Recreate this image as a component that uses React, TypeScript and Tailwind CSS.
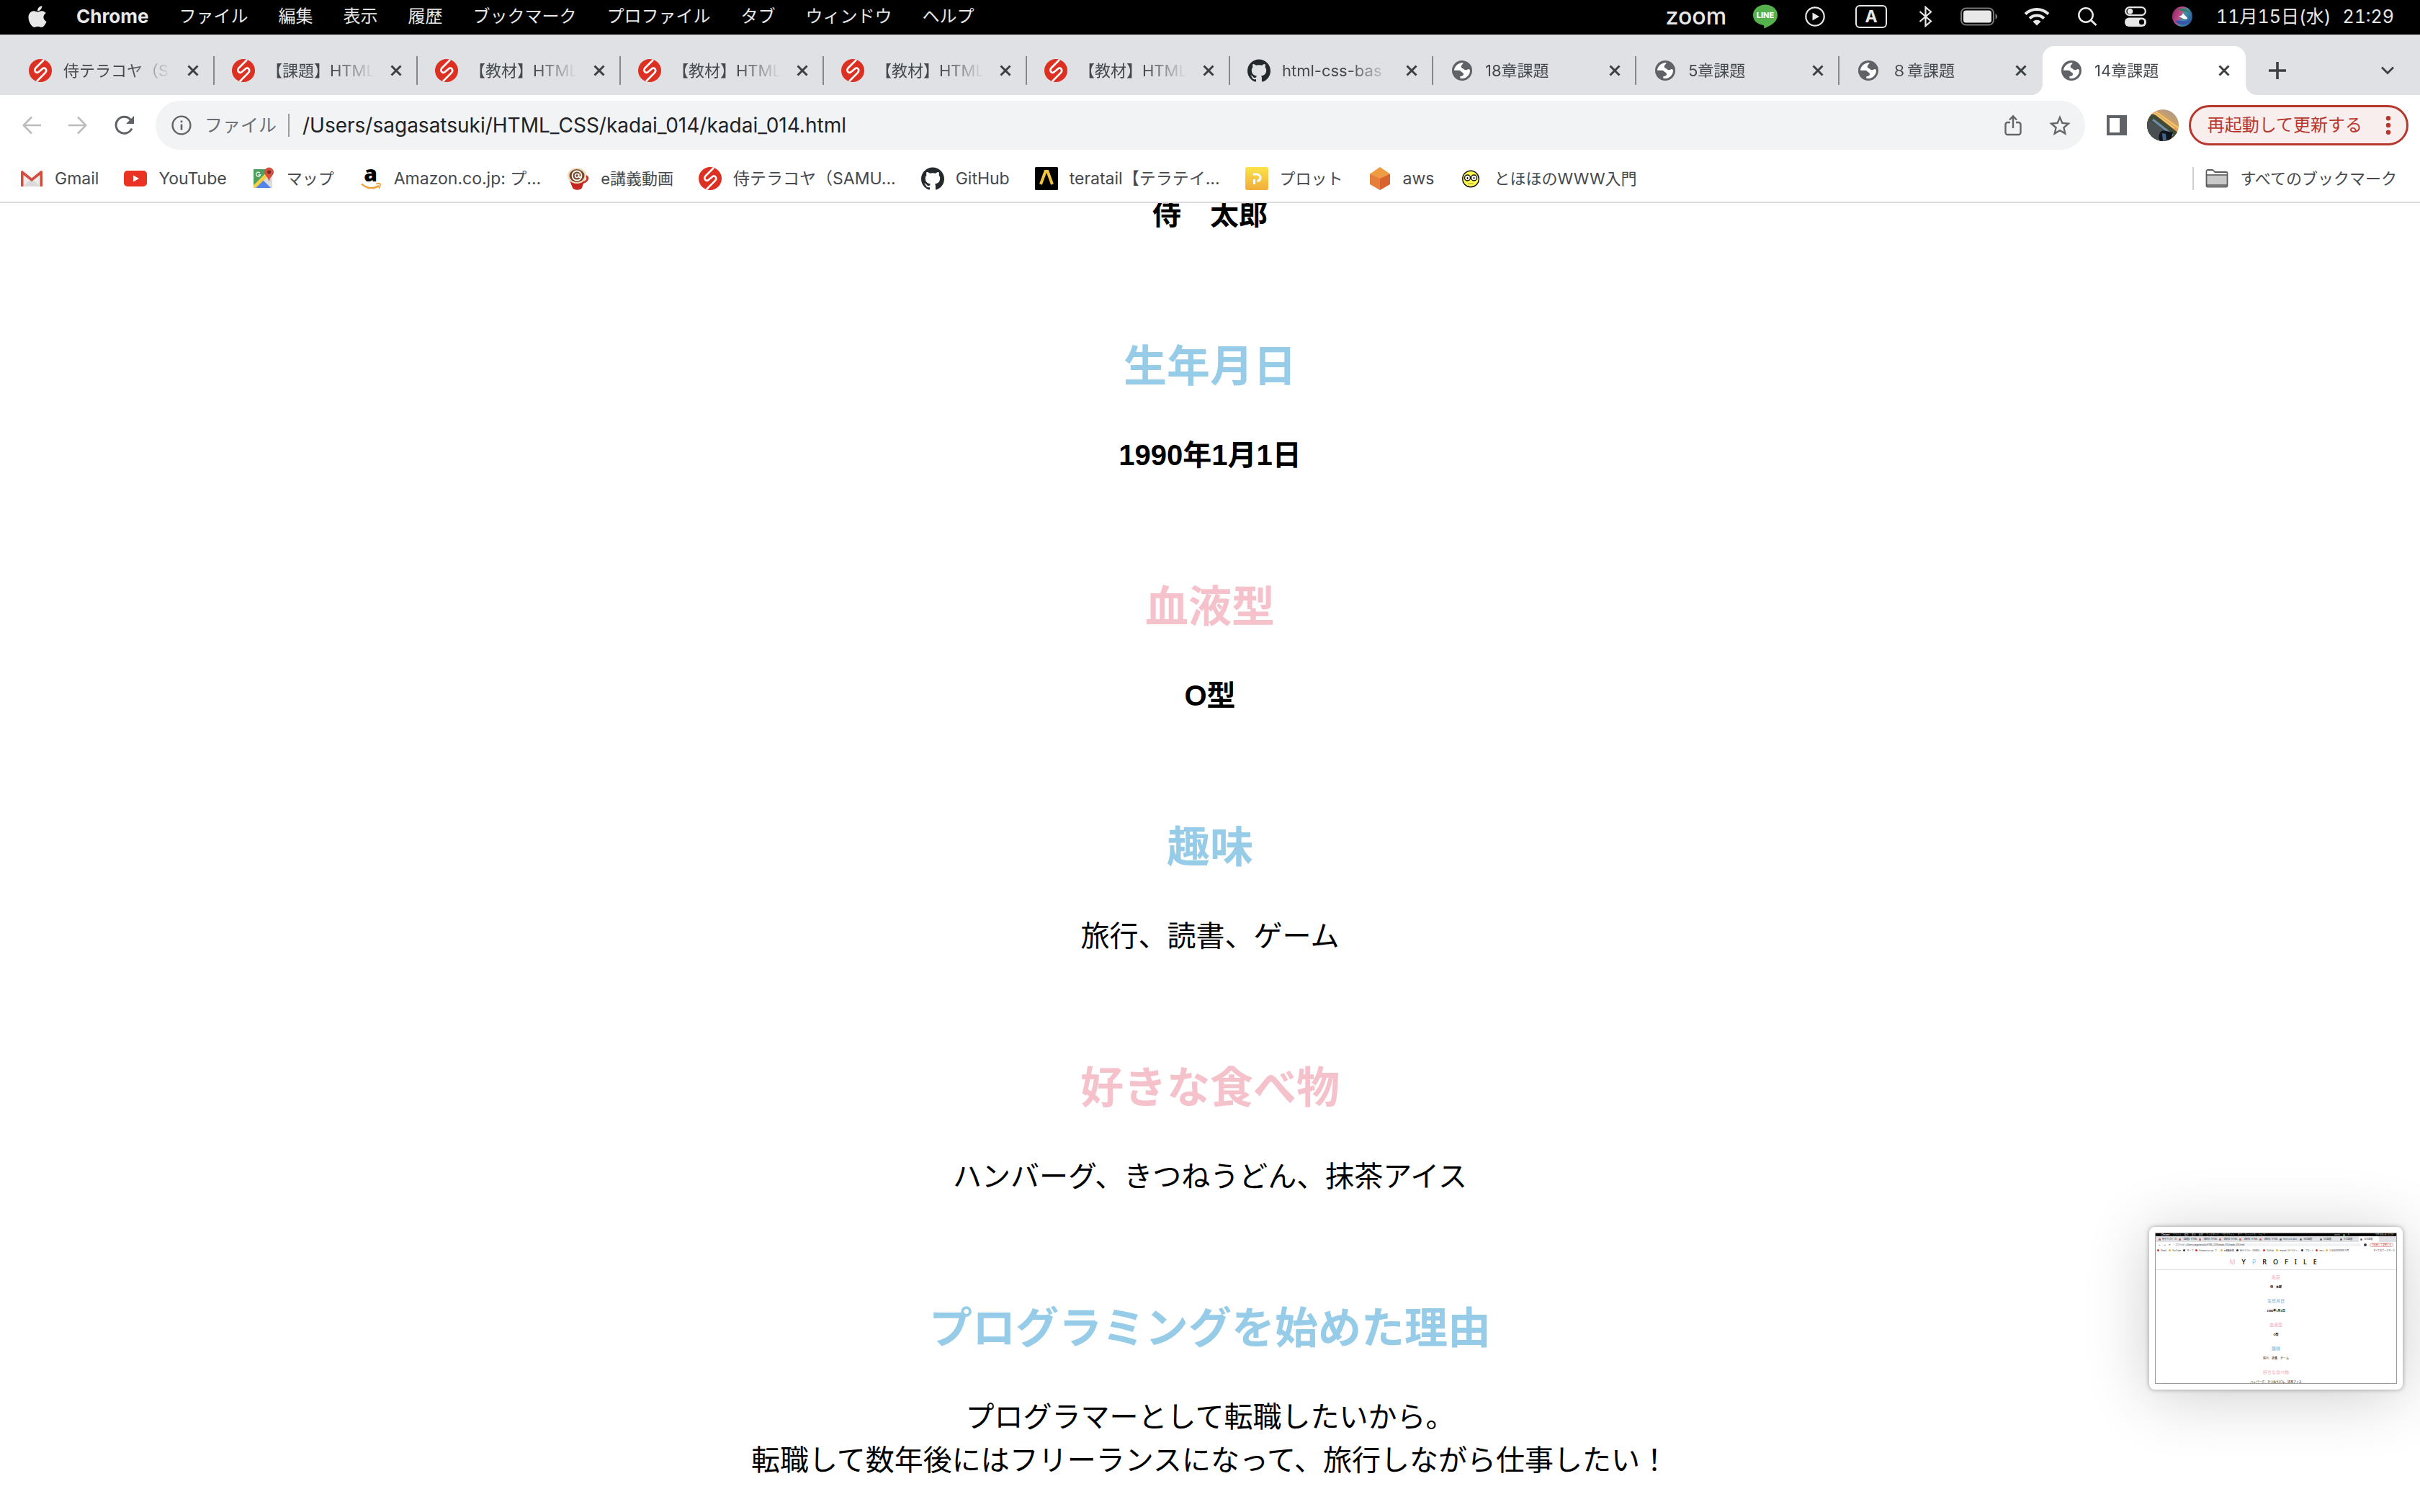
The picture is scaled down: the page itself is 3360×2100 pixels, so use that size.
import type { ReactNode } from "react";
import { FaApple } from "react-icons/fa";
import { SiGithub } from "react-icons/si";

const uiFont = "font-['Inter','Noto_Sans_CJK_JP',sans-serif]";

/* ---------- icons ---------- */

type IconProps = { className?: string };

function SamuraiIcon({ className = "size-8" }: IconProps) {
  return (
    <svg viewBox="0 0 32 32" className={className} aria-hidden="true">
      <circle cx="16" cy="16" r="16" fill="#dc3023" />
      <path
        d="M21 1 L9.500 12.500 C6.500 15.800 10 20.600 13.600 18 L19 13.400 C22.600 10.600 26 15.400 23 18.800 L11 31"
        fill="none"
        stroke="#fff"
        strokeWidth="2.600"
      />
    </svg>
  );
}

function GlobeIcon({ className = "size-7" }: IconProps) {
  return (
    <svg viewBox="0 0 84 84" className={className} aria-hidden="true">
      <circle cx="42" cy="42" r="42" fill="#5f6368" />
      <path
        d="M9 41 C10 24 26 10 46 9 C48 14 40 18 38 24 C37 32 46 32 49 36 C53 41 62 41 66 37 C70 35 75 38 75 42 C75 60 60 75 42 75 L34 74 V66 C38 66 47 66 48 58 C48 49 40 50 37 45 C35 41 31 41 26 41 Z"
        fill="#fff"
      />
    </svg>
  );
}

function CloseIcon() {
  return (
    <svg viewBox="0 0 16 16" className="size-4" aria-hidden="true">
      <path d="M1.500 1.500 L14.500 14.500 M14.500 1.500 L1.500 14.500" stroke="#3c4043" strokeWidth="3" />
    </svg>
  );
}

function GmailIcon() {
  return (
    <svg viewBox="0 0 32 32" className="size-8" aria-hidden="true">
      <rect x="1" y="5" width="30" height="22" rx="2" fill="#ececec" />
      <path d="M4 27 L16 16 L28 27 Z" fill="#dadada" />
      <path d="M5 5 L16 14 L27 5 Z" fill="#f8f8f8" />
      <path d="M1 7 a2 2 0 0 1 2-2 L16 15.500 L29 5 a2 2 0 0 1 2 2 V27 H27.500 V11 L16 20 L4.500 11 V27 H1 Z" fill="#d54b3d" />
    </svg>
  );
}

function YouTubeIcon() {
  return (
    <svg viewBox="0 0 32 32" className="size-8" aria-hidden="true">
      <rect y="5" width="32" height="22" rx="5" fill="#ea3323" />
      <path d="M13 11.500 L21 16 L13 20.500 Z" fill="#fff" />
    </svg>
  );
}

function MapsIcon() {
  return (
    <svg viewBox="0 0 32 32" className="size-8" aria-hidden="true">
      <rect x="2" y="3" width="26" height="26" rx="2" fill="#4c9f5d" />
      <path d="M2 27 L22 7 L28 13 V27 a2 2 0 0 1 -2 2 H4 a2 2 0 0 1 -2 -2 Z" fill="#dcdcdc" />
      <path d="M5 29 L15 18 L26 29 Z" fill="#5384ec" />
      <path d="M2 25 L20 7 L24 11 L5 29 H4 a2 2 0 0 1 -2 -2 Z" fill="#f5ce47" />
      <path d="M2 3 H17 V10 L2 25 Z" fill="#4c9f5d" />
      <path d="M11 8.300 A3 3 0 1 0 11.500 10.800 H8.500" fill="none" stroke="#fff" strokeWidth="1.300" />
      <path d="M23.500 0.500 a6.500 6.500 0 0 1 6.500 6.500 c0 5 -5.500 6 -6.500 14 c-1 -8 -6.500 -9 -6.500 -14 a6.500 6.500 0 0 1 6.500 -6.500 Z" fill="#d5503f" />
      <circle cx="23.500" cy="7" r="2.500" fill="#722b20" />
    </svg>
  );
}

function AmazonIcon() {
  return (
    <span className="flex size-8 flex-col items-center" aria-hidden="true">
      <span className="h-[22px] text-[30px] leading-[18px] font-extrabold text-black font-['Open_Sans',sans-serif]">a</span>
      <svg viewBox="0 0 30 10" className="h-[10px] w-[30px]">
        <path d="M2 1.500 C9 8.500 20 8.500 26 4" fill="none" stroke="#f19e38" strokeWidth="2.400" />
        <path d="M22 1.500 C25 0.500 28 1 28 2 C28 4 27 6.500 26 7.500" fill="none" stroke="#f19e38" strokeWidth="1.800" />
      </svg>
    </span>
  );
}

function CupIcon() {
  return (
    <svg viewBox="0 0 32 32" className="size-8" aria-hidden="true">
      <path d="M24 14 C31 9 33 20 22 22" fill="none" stroke="#c9302a" strokeWidth="3" />
      <path d="M4 16 H26 L22 29 C20 32.500 11 32.500 9 29 Z" fill="#c5261f" />
      <ellipse cx="15" cy="12" rx="13" ry="11" fill="#ecdcc0" />
      <ellipse cx="15" cy="12" rx="10.500" ry="9" fill="#7a4527" />
      <circle cx="15" cy="12" r="6.500" fill="none" stroke="#fff" strokeWidth="1.800" />
      <circle cx="15" cy="12" r="2.500" fill="none" stroke="#fff" strokeWidth="1.600" />
      <path d="M17.800 9 V13 C18 15 20.500 14.500 21 12.500" fill="none" stroke="#fff" strokeWidth="1.500" />
    </svg>
  );
}

function TeratailIcon() {
  return (
    <svg viewBox="0 0 32 32" className="size-8" aria-hidden="true">
      <rect width="32" height="32" rx="1.500" fill="#000" />
      <path d="M8 24 L14.500 6 H17.500 L24 24" fill="none" stroke="#f3c33c" strokeWidth="4" />
    </svg>
  );
}

function PlotIcon() {
  return (
    <svg viewBox="0 0 32 32" className="size-8" aria-hidden="true">
      <defs>
        <linearGradient id="plot" x1="0" y1="0" x2="0" y2="1">
          <stop offset="0" stopColor="#fbe34a" />
          <stop offset="1" stopColor="#f1ad3b" />
        </linearGradient>
      </defs>
      <rect width="32" height="32" rx="3" fill="url(#plot)" />
      <path d="M11 10 H16 a5 5 0 0 1 5 5 v0 a5 5 0 0 1 -4.500 4.500 M12.500 17 V24" fill="none" stroke="#fff" strokeWidth="3" />
    </svg>
  );
}

function AwsIcon() {
  return (
    <svg viewBox="0 0 32 32" className="size-8" aria-hidden="true">
      <path d="M16 0 L30 9.500 L16 18 L2 9.500 Z" fill="#ee9c41" />
      <path d="M2 9.500 L16 16 V32 L2 24 Z" fill="#e4803c" />
      <path d="M30 9.500 L16 16 V32 L30 24 Z" fill="#d8632f" />
    </svg>
  );
}

function TohohoIcon() {
  return (
    <svg viewBox="0 0 32 32" className="size-8" aria-hidden="true">
      <circle cx="16" cy="16.500" r="11.300" fill="#fdf94f" stroke="#111" strokeWidth="1.400" />
      <circle cx="11.500" cy="15" r="4" fill="#fff" stroke="#111" strokeWidth="1.400" />
      <circle cx="20.500" cy="15" r="4" fill="#fff" stroke="#111" strokeWidth="1.400" />
      <path d="M11.500 14 V17 M20.500 14 V17" stroke="#111" strokeWidth="1.600" />
      <path d="M12 23 H20" stroke="#b5a82c" strokeWidth="1.200" />
    </svg>
  );
}

function FolderIcon() {
  return (
    <svg viewBox="0 0 32 32" className="size-8" aria-hidden="true">
      <path d="M1.500 26 V6 a2 2 0 0 1 2-2 H10 L13 7 H29 a1.500 1.500 0 0 1 1.500 1.500 V26 a1.500 1.500 0 0 1 -1.500 1.500 H3 A1.500 1.500 0 0 1 1.500 26 Z" fill="#c9c9c9" stroke="#5a5a5a" strokeWidth="1.800" />
      <path d="M2.500 5 H10 L13 8 H29.500 V10 H2.500 Z" fill="#fff" />
      <path d="M1.500 11 H30.500 M2 25 H30" stroke="#5a5a5a" strokeWidth="1.400" />
    </svg>
  );
}

function BackIcon({ className = "size-[26px]" }: IconProps) {
  return (
    <svg viewBox="0 0 26 26" className={className} aria-hidden="true">
      <path d="M26 13 H2 M13 1.500 L1.700 13 L13 24.500" fill="none" stroke="#babcbe" strokeWidth="2.600" />
    </svg>
  );
}

function ReloadIcon() {
  return (
    <svg viewBox="0 0 28 28" className="size-7" aria-hidden="true">
      <path d="M24 18.500 A11.500 11.500 0 1 1 22.500 6.500" fill="none" stroke="#5f6368" strokeWidth="3" />
      <path d="M27 1 V12 H16 Z" fill="#5f6368" />
    </svg>
  );
}

function InfoIcon() {
  return (
    <svg viewBox="0 0 28 28" className="size-7" aria-hidden="true">
      <circle cx="14" cy="14" r="12.400" fill="none" stroke="#5f6368" strokeWidth="2.400" />
      <path d="M14 12.500 V20.500 M14 7.500 V10.200" stroke="#5f6368" strokeWidth="2.600" />
    </svg>
  );
}

function ShareIcon() {
  return (
    <svg viewBox="0 0 24 30" className="h-[30px] w-6" aria-hidden="true">
      <path d="M8 11 H4.500 a3 3 0 0 0 -3 3 V25 a3 3 0 0 0 3 3 H19.500 a3 3 0 0 0 3 -3 V14 a3 3 0 0 0 -3 -3 H16 M12 19 V3 M7 7.500 L12 2.300 L17 7.500" fill="none" stroke="#666" strokeWidth="2.400" />
    </svg>
  );
}

function StarIcon() {
  return (
    <svg viewBox="2 2 20 19" className="h-7 w-[30px]" aria-hidden="true">
      <path
        d="M22 9.240l-7.190-.62L12 2 9.190 8.630 2 9.240l5.460 4.730L5.820 21 12 17.270 18.180 21l-1.630-7.030L22 9.240zM12 15.400l-3.760 2.270 1-4.280-3.320-2.880 4.380-.38L12 6.100l1.710 4.040 4.380.38-3.320 2.880 1 4.280L12 15.400z"
        fill="#666"
      />
    </svg>
  );
}

function SidePanelIcon() {
  return (
    <svg viewBox="0 0 28 28" className="size-7" aria-hidden="true">
      <path d="M0 0 H28 V28 H0 Z M4 4 V24 H18 V4 Z" fill="#5f6368" fillRule="evenodd" />
    </svg>
  );
}

function Avatar() {
  return (
    <svg viewBox="0 0 44 44" className="size-11" aria-hidden="true">
      <defs>
        <clipPath id="avatar">
          <circle cx="22" cy="22" r="22" />
        </clipPath>
        <linearGradient id="sky" x1="0.200" y1="0.800" x2="0.700" y2="0">
          <stop offset="0" stopColor="#f0a63c" />
          <stop offset="0.450" stopColor="#eda552" />
          <stop offset="1" stopColor="#a99a88" />
        </linearGradient>
      </defs>
      <g clipPath="url(#avatar)">
        <rect width="44" height="44" fill="url(#sky)" />
        <path d="M12 3 L44 26 M10 5 L38 26" stroke="#f7c765" strokeWidth="2" />
        <path d="M0 4 L12 8 L44 33 V44 H0 Z" fill="#414a34" />
        <path d="M8 14 L36 36" stroke="#6d8db0" strokeWidth="3" />
        <path d="M0 14 L12 20 L30 34 L24 44 H0 Z" fill="#4a4f52" />
        <path d="M16 40 C18 26 22 29 36 32 L32 44 H18 Z" fill="#10151b" />
        <path d="M21 33 L26 34 L27 44 H22 Z" fill="#45648c" />
      </g>
    </svg>
  );
}

/* ---------- menu bar ---------- */

const menus = ["ファイル", "編集", "表示", "履歴", "ブックマーク", "プロファイル", "タブ", "ウィンドウ", "ヘルプ"];

function MenuBar() {
  return (
    <header className="flex h-12 shrink-0 items-center justify-between bg-black pr-9 pb-[2px] pl-10 text-[#e8e8e8]">
      <nav aria-label="メニューバー" className="flex items-center gap-[42px] text-[24px] leading-8">
        <button aria-label="Apple" className="flex w-6 justify-center">
          <FaApple className="size-[34px] shrink-0" />
        </button>
        <button className="text-[26px] font-bold">Chrome</button>
        {menus.map((m) => (
          <button key={m}>{m}</button>
        ))}
      </nav>
      <div className="flex items-center text-[25px] leading-8">
        <span className="mr-9 text-[32px] font-medium">zoom</span>
        <svg viewBox="0 0 36 34" className="mr-[37px] h-[34px] w-9" aria-label="LINE">
          <path d="M18 0.500 C8 0.500 1 7 1 15 C1 23 7 27.500 15 29 C17 29.500 16 32 16.500 33.500 C22 31 35 26 35 15 C35 7 28 0.500 18 0.500 Z" fill="#54b14c" />
          <text x="18" y="19" textAnchor="middle" fontSize="11" fontWeight="800" fill="#fff" className="font-['Inter',sans-serif]">
            LINE
          </text>
        </svg>
        <svg viewBox="0 0 28 28" className="mr-[42px] size-7" aria-hidden="true">
          <circle cx="14" cy="14" r="12.700" fill="none" stroke="#e8e8e8" strokeWidth="2.200" />
          <path d="M10.500 8.500 L20 14 L10.500 19.500 Z" fill="#e8e8e8" />
        </svg>
        <span className="mr-[44px] flex h-8 w-11 items-center justify-center rounded-md border-2 border-[#e8e8e8] text-[23px] font-bold">A</span>
        <svg viewBox="0 0 20 30" className="mr-[38px] h-[30px] w-5" aria-hidden="true">
          <path d="M1.500 8 L17 21.500 L9.500 28 V2 L17 8.500 L1.500 22" fill="none" stroke="#e8e8e8" strokeWidth="2.200" />
        </svg>
        <svg viewBox="0 0 52 26" className="mr-9 h-[26px] w-[52px]" aria-hidden="true">
          <rect x="1" y="1.500" width="45" height="23" rx="6.500" fill="none" stroke="#777" strokeWidth="2" />
          <rect x="4" y="4.500" width="39" height="17" rx="3.500" fill="#e8e8e8" />
          <path d="M48.500 9 C52 10.500 52 15.500 48.500 17 Z" fill="#777" />
        </svg>
        <svg viewBox="0 0 36 26" className="mr-[38px] h-[26px] w-9" aria-hidden="true">
          <path d="M2 9.500 C11 0.800 25 0.800 34 9.500 M8 15.500 C14 10.200 22 10.200 28 15.500" fill="none" stroke="#e8e8e8" strokeWidth="4" />
          <path d="M12.500 20 C15.500 17 20.500 17 23.500 20 L18 25.500 Z" fill="#e8e8e8" />
        </svg>
        <svg viewBox="0 0 28 28" className="mr-[38px] size-7" aria-hidden="true">
          <circle cx="12" cy="12" r="9.700" fill="none" stroke="#e8e8e8" strokeWidth="2.500" />
          <path d="M19 19 L26.500 26" stroke="#e8e8e8" strokeWidth="3" />
        </svg>
        <svg viewBox="0 0 30 28" className="mr-9 h-7 w-[30px]" aria-hidden="true">
          <rect x="1.200" y="1.200" width="27.600" height="11" rx="5.500" fill="none" stroke="#e8e8e8" strokeWidth="2.200" />
          <circle cx="7.500" cy="6.700" r="3.800" fill="#e8e8e8" />
          <rect x="0" y="15.500" width="30" height="12.500" rx="6" fill="#e8e8e8" />
          <circle cx="23.500" cy="21.700" r="3.600" fill="#000" />
        </svg>
        <svg viewBox="0 0 28 28" className="mr-[33px] size-7" aria-hidden="true">
          <defs>
            <linearGradient id="siri" x1="0" y1="0.300" x2="1" y2="0.700">
              <stop offset="0" stopColor="#8e2a68" />
              <stop offset="0.350" stopColor="#c14a84" />
              <stop offset="0.600" stopColor="#3a93a4" />
              <stop offset="1" stopColor="#2d4f9c" />
            </linearGradient>
          </defs>
          <circle cx="14" cy="14" r="14" fill="url(#siri)" />
          <path d="M8 4 C14 1 22 4 24 9 C18 6 13 7 8 4 Z" fill="#357c66" />
          <path d="M4 20 C10 28 20 27 25 18 C18 23 12 18 4 20 Z" fill="#3456b0" />
          <path d="M15 9 C17 13 21 14 21 17 C17 19 15 16 9 14 C13 13 14 12 15 9 Z" fill="#fff" />
        </svg>
        <time className="flex gap-4 tabular-nums">
          <span>11月15日(水)</span>
          <span>21:29</span>
        </time>
      </div>
    </header>
  );
}

/* ---------- tabs ---------- */

type Tab = { title: string; icon: "samurai" | "github" | "globe" };

const tabs: Tab[] = [
  { title: "侍テラコヤ（S", icon: "samurai" },
  { title: "【課題】HTML", icon: "samurai" },
  { title: "【教材】HTML", icon: "samurai" },
  { title: "【教材】HTML", icon: "samurai" },
  { title: "【教材】HTML", icon: "samurai" },
  { title: "【教材】HTML", icon: "samurai" },
  { title: "html-css-bas", icon: "github" },
  { title: "18章課題", icon: "globe" },
  { title: "5章課題", icon: "globe" },
  { title: "８章課題", icon: "globe" },
  { title: "14章課題", icon: "globe" },
];

const tabIcons: Record<Tab["icon"], ReactNode> = {
  samurai: <SamuraiIcon />,
  github: <SiGithub className="size-8 text-[#24292e]" />,
  globe: <GlobeIcon />,
};

function TabStrip() {
  const last = tabs.length - 1;
  return (
    <div className="flex h-[84px] shrink-0 items-end bg-[#dfe1e5] pr-9 pl-4">
      <ul className="flex h-[68px] min-w-0">
        {tabs.map((tab, i) => (
          <li
            key={i}
            className={
              i === last
                ? "relative flex w-[282px] items-center rounded-t-2xl bg-white pl-6"
                : "flex w-[282px] items-center pl-6"
            }
          >
            {i === last && (
              <>
                <span className="absolute bottom-0 -left-4 size-4 bg-[radial-gradient(circle_at_0_0,transparent_16px,white_16px)]" />
                <span className="absolute -right-4 bottom-0 size-4 bg-[radial-gradient(circle_at_100%_0,transparent_16px,white_16px)]" />
              </>
            )}
            <span className="flex w-8 shrink-0 justify-center">{tabIcons[tab.icon]}</span>
            <button className="ml-4 h-8 w-[150px] shrink-0 text-left text-[22px] leading-8 whitespace-nowrap text-[#45494d] [mask-image:linear-gradient(to_right,black_62%,transparent)]">
              {tab.title}
            </button>
            <button aria-label="閉じる" className="ml-[22px]">
              <CloseIcon />
            </button>
            {i < last - 1 && <span className="ml-5 h-10 w-[2px] shrink-0 bg-[#85888c]" />}
          </li>
        ))}
      </ul>
      <div className="flex h-[68px] flex-1 items-center justify-between pl-8">
        <button aria-label="新しいタブ">
          <svg viewBox="0 0 24 24" className="size-6" aria-hidden="true">
            <path d="M12 0 V24 M0 12 H24" stroke="#3c4043" strokeWidth="3.600" />
          </svg>
        </button>
        <button aria-label="タブを検索">
          <svg viewBox="0 0 18 12" className="h-3 w-[18px]" aria-hidden="true">
            <path d="M1 1.500 L9 9.500 L17 1.500" fill="none" stroke="#3c4043" strokeWidth="2.800" />
          </svg>
        </button>
      </div>
    </div>
  );
}

/* ---------- toolbar ---------- */

function Toolbar() {
  return (
    <div className="flex h-[84px] shrink-0 items-center pr-4 pl-[31px]">
      <button aria-label="戻る" className="mr-[38px]">
        <BackIcon />
      </button>
      <button aria-label="進む" className="mr-[38px]">
        <BackIcon className="size-[26px] rotate-180" />
      </button>
      <button aria-label="再読み込み" className="mr-[29px]">
        <ReloadIcon />
      </button>
      <div className="flex h-[68px] flex-1 items-center rounded-full bg-[#f1f3f5] pr-5 pl-[22px]">
        <InfoIcon />
        <label htmlFor="url" className="mr-4 ml-[18px] text-[25px] leading-8 text-[#6a6e73]">
          ファイル
        </label>
        <span className="mr-[18px] h-8 w-[2px] bg-[#9a9da1]" />
        <input
          id="url"
          readOnly
          value="/Users/sagasatsuki/HTML_CSS/kadai_014/kadai_014.html"
          className="min-w-0 flex-1 bg-transparent text-[28px] leading-9 text-[#202124] outline-none"
        />
        <button aria-label="共有" className="mr-[38px]">
          <ShareIcon />
        </button>
        <button aria-label="ブックマークに追加">
          <StarIcon />
        </button>
      </div>
      <button aria-label="サイドパネル" className="mr-7 ml-[30px]">
        <SidePanelIcon />
      </button>
      <button aria-label="プロフィール" className="mr-[14px]">
        <Avatar />
      </button>
      <button className="flex h-14 items-center gap-8 rounded-full border-[3px] border-[#b8372c] bg-[#f9eeee] pr-[21px] pl-[23px] text-[24px] leading-8 text-[#b8372c]">
        再起動して更新する
        <svg viewBox="0 0 8 26" className="h-[26px] w-2" aria-hidden="true">
          <circle cx="4" cy="3.200" r="3.200" fill="#b8372c" />
          <circle cx="4" cy="13" r="3.200" fill="#b8372c" />
          <circle cx="4" cy="22.800" r="3.200" fill="#b8372c" />
        </svg>
      </button>
    </div>
  );
}

/* ---------- bookmarks ---------- */

type Bookmark = { label: string; icon: ReactNode; compact?: boolean };

const bookmarks: Bookmark[] = [
  { label: "Gmail", icon: <GmailIcon /> },
  { label: "YouTube", icon: <YouTubeIcon /> },
  { label: "マップ", icon: <MapsIcon />, compact: true },
  { label: "Amazon.co.jp: プ...", icon: <AmazonIcon /> },
  { label: "e講義動画", icon: <CupIcon />, compact: true },
  { label: "侍テラコヤ（SAMU...", icon: <SamuraiIcon /> },
  { label: "GitHub", icon: <SiGithub className="size-8 text-[#24292e]" /> },
  { label: "teratail【テラテイ...", icon: <TeratailIcon /> },
  { label: "プロット", icon: <PlotIcon />, compact: true },
  { label: "aws", icon: <AwsIcon /> },
  { label: "とほほのWWW入門", icon: <TohohoIcon />, compact: true },
];

function BookmarksBar() {
  return (
    <nav
      aria-label="ブックマーク"
      className="flex h-[66px] shrink-0 items-center justify-between border-b-2 border-[#dcdcdc] px-7 leading-8 text-[#45494d]"
    >
      <div className="flex items-center gap-[35px]">
        {bookmarks.map((b) => (
          <a key={b.label} href="#" className="flex items-center gap-4 whitespace-nowrap">
            {b.icon}
            <span className={b.compact ? "text-[22px]" : "text-[23px]"}>{b.label}</span>
          </a>
        ))}
      </div>
      <button className="mr-1 flex items-center gap-4">
        <span className="h-8 w-[2px] bg-[#cfd1d4]" />
        <FolderIcon />
        <span className="text-[22px]">すべてのブックマーク</span>
      </button>
    </nav>
  );
}

/* ---------- page ---------- */

type Entry = { title: string; lines: string[]; bold?: boolean };

const entries: Entry[] = [
  { title: "生年月日", lines: ["1990年1月1日"], bold: true },
  { title: "血液型", lines: ["O型"], bold: true },
  { title: "趣味", lines: ["旅行、読書、ゲーム"] },
  { title: "好きな食べ物", lines: ["ハンバーグ、きつねうどん、抹茶アイス"] },
  {
    title: "プログラミングを始めた理由",
    lines: ["プログラマーとして転職したいから。", "転職して数年後にはフリーランスになって、旅行しながら仕事したい！"],
  },
];

function ProfilePage() {
  return (
    <main className="min-h-0 flex-1 overflow-hidden bg-white text-center font-['Liberation_Sans','Noto_Sans_CJK_JP',sans-serif] text-[40px] leading-[60px] text-black">
      <p className="-mt-[14px] font-bold">侍　太郎</p>
      {entries.map((e, i) => (
        <section key={e.title} className="mt-[137px]">
          <h2
            className={
              i % 2 === 0
                ? "mb-[47px] text-[60px] leading-[90px] font-bold text-[#97cce8]"
                : "mb-[47px] text-[60px] leading-[90px] font-bold text-[#f5c2cc]"
            }
          >
            {e.title}
          </h2>
          {e.lines.map((l) => (
            <p key={l} className={e.bold ? "font-bold" : ""}>
              {l}
            </p>
          ))}
        </section>
      ))}
    </main>
  );
}

/* ---------- floating capture preview ---------- */

const miniEntries: Entry[] = [{ title: "名前", lines: ["侍　太郎"], bold: true }, ...entries.slice(0, 4)];

function CapturePreview() {
  return (
    <aside
      aria-label="プレビュー"
      className="absolute right-6 bottom-[170px] h-[226px] w-[352px] rounded-lg bg-white p-2 shadow-[0_0_6px_rgba(0,0,0,0.35),0_8px_90px_rgba(0,0,0,0.2)]"
    >
      <div className="flex h-full flex-col overflow-hidden border border-[#999] text-[3px] leading-[4px] text-[#333]">
        <div className="flex h-1 shrink-0 items-center gap-1 bg-black px-1 text-[#ccc]">
          <b className="ml-1">Chrome</b>
          {menus.map((m) => (
            <span key={m}>{m}</span>
          ))}
          <span className="ml-auto">zoom</span>
          <span className="size-[3px] rounded-full bg-[#54b14c]" />
          <span>A</span>
          <span className="ml-8">11月15日(水) 21:29</span>
        </div>
        <div className="flex h-2 shrink-0 bg-[#dfe1e5] pl-[2px]">
          {tabs.map((t, i) => (
            <span
              key={i}
              className={
                i === tabs.length - 1
                  ? "flex w-7 items-center gap-[2px] rounded-t-[2px] bg-white px-[2px]"
                  : "flex w-7 items-center gap-[2px] px-[2px]"
              }
            >
              {t.icon === "samurai" ? (
                <SamuraiIcon className="size-[3px] shrink-0" />
              ) : (
                <span className="size-[3px] shrink-0 rounded-full bg-[#5f6368]" />
              )}
              <span className="flex-1 whitespace-nowrap">{t.title}</span>
            </span>
          ))}
        </div>
        <div className="flex h-2 shrink-0 items-center gap-1 px-1">
          <span>←</span>
          <span>→</span>
          <span>⟳</span>
          <span className="flex-1 rounded-full bg-[#f1f3f5] pl-[3px]">ファイル | /Users/sagasatsuki/HTML_CSS/kadai_014/kadai_014.html</span>
          <span className="size-1 rounded-full bg-[#333d49]" />
          <span className="rounded-full border border-[#e6aaa5] px-[2px] text-[#b8372c]">再起動して更新する</span>
        </div>
        <div className="flex h-[7px] shrink-0 items-center gap-[3px] px-[2px] whitespace-nowrap">
          {bookmarks.map((b, i) => (
            <span key={b.label} className="flex items-center gap-[2px]">
              <span className={i % 3 === 0 ? "size-[3px] rounded-full bg-[#dc3023]" : i % 3 === 1 ? "size-[3px] rounded-full bg-[#f1ad3b]" : "size-[3px] rounded-full bg-[#333]"} />
              {b.label}
            </span>
          ))}
          <span className="ml-auto">すべてのブックマーク</span>
        </div>
        <h3 className="mr-2 flex h-[23px] shrink-0 items-center justify-center gap-[9px] pt-[2px] text-[9px] leading-3 font-medium text-black font-['Noto_Sans',sans-serif]">
          {"MYPROFILE".split("").map((c, i) => (
            <span key={i} className={i === 0 ? "text-[#f5c2cc]" : i === 2 ? "text-[#97cce8]" : ""}>
              {c}
            </span>
          ))}
        </h3>
        <div className="h-px shrink-0 bg-[#ddd]" />
        <div className="flex flex-col pt-[5px] text-center font-['Liberation_Sans','Noto_Sans_CJK_JP',sans-serif] text-[4px] leading-[6px] text-black">
          {miniEntries.map((e, i) => (
            <div key={e.title} className="mb-[11px]">
              <div
                className={
                  i % 2 === 0
                    ? "mb-[6px] text-[6px] leading-[10px] font-bold text-[#f5c2cc]"
                    : "mb-[6px] text-[6px] leading-[10px] font-bold text-[#97cce8]"
                }
              >
                {e.title}
              </div>
              <div className={e.bold ? "font-bold" : ""}>{e.lines[0]}</div>
            </div>
          ))}
        </div>
      </div>
    </aside>
  );
}

export default function App() {
  return (
    <div className={`relative flex h-screen flex-col overflow-hidden bg-white ${uiFont}`}>
      <MenuBar />
      <TabStrip />
      <Toolbar />
      <BookmarksBar />
      <ProfilePage />
      <CapturePreview />
    </div>
  );
}
